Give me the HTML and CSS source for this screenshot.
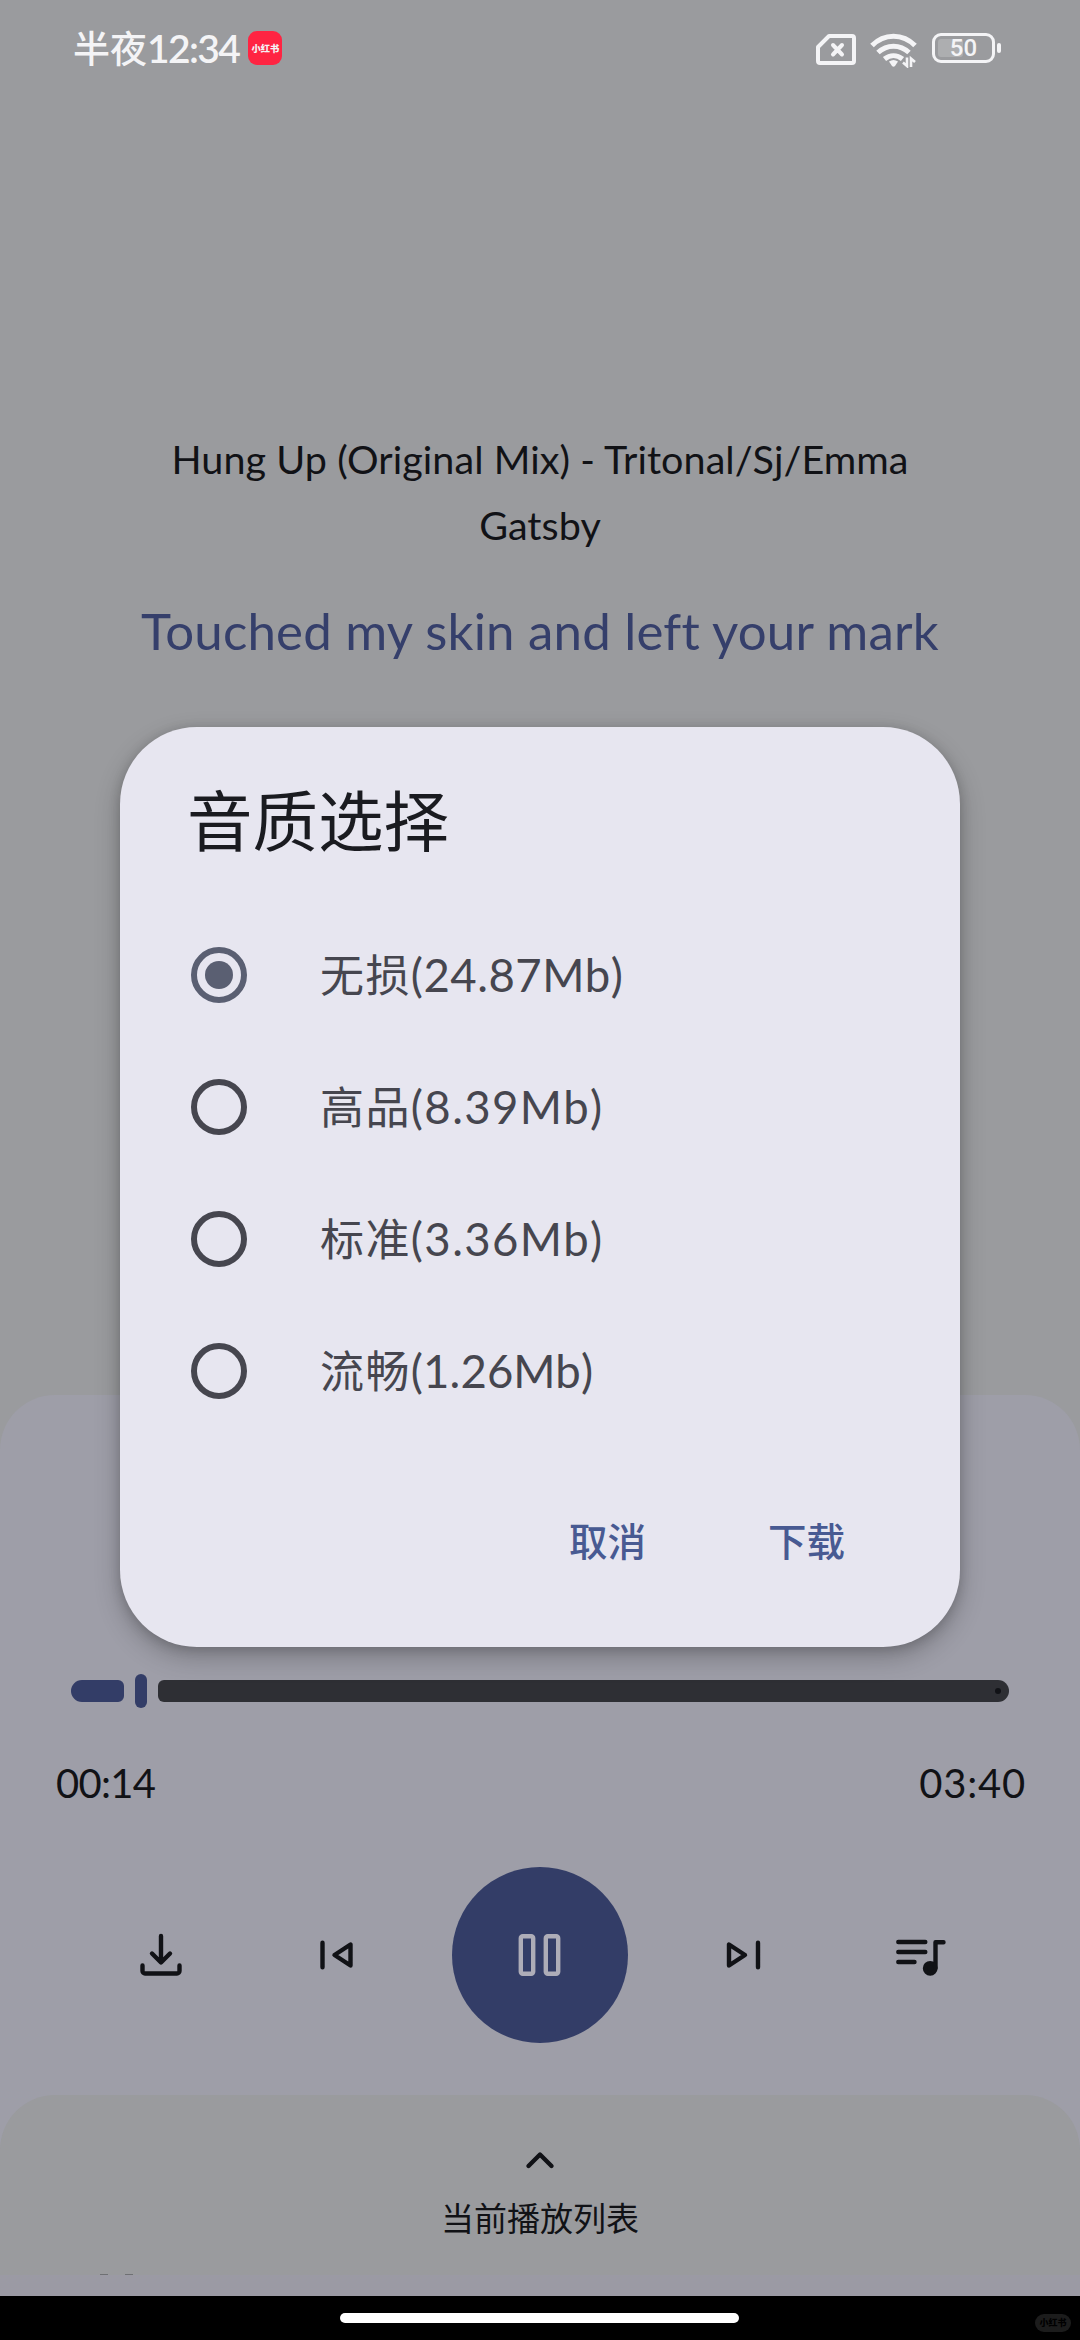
FILE: index.html
```
<!DOCTYPE html>
<html lang="zh-CN">
<head>
<meta charset="utf-8">
<title>音质选择</title>
<link rel="stylesheet" href="styles.css">
</head>
<body>
<div class="screen">
  <header class="status">
    <div class="clock"><span class="clock-word">半夜</span><span class="clock-time">12:34</span></div>
    <div class="app-badge"><span>小红书</span></div>
    <div class="status-icons">
      <svg class="sim" width="40" height="32" viewBox="0 0 40 32" fill="none" stroke="#f4f4f6" stroke-width="4" stroke-linecap="round" stroke-linejoin="round"><path d="M13 2H36a2 2 0 0 1 2 2V27a2 2 0 0 1-2 2H4a2 2 0 0 1-2-2V13Z"/><path d="M17 11l9 9.500M26 11l-9 9.500"/></svg>
      <svg class="wifi" width="48" height="36" viewBox="0 0 48 36" fill="none" stroke="#f4f4f6" stroke-width="5"><path d="M2 13.500C14 1 33 1 45 13.500"/><path d="M8 20.500C17 12 30 12 39 20.500"/><path d="M14.500 27C20 22.500 27 22.500 32.500 27"/><path d="M19 29.500Q23.500 26.500 28 29.500L25 34q-1.500 1.500-3 0Z" fill="#f4f4f6" stroke="none"/><path d="M37 25.500v8.500l-4-3.500M41 35v-8.500l4 3.500" stroke-width="2.600"/></svg>
      <div class="battery"><div class="battery-level"></div><span>50</span></div>
      <div class="battery-nub"></div>
    </div>
  </header>

  <main class="lyrics">
    <h1 class="song">Hung Up (Original Mix) - Tritonal/Sj/Emma<br>Gatsby</h1>
    <p class="line">Touched my skin and left your mark</p>
  </main>

  <section class="player">
    <div class="slider">
      <div class="played"></div><div class="thumb"></div><div class="remaining"><i></i></div>
    </div>
    <div class="times"><span class="elapsed">00:14</span><span class="total">03:40</span></div>
    <div class="controls">
      <svg width="66" height="66" viewBox="0 0 66 66"><path d="M33 14V40M24 31.500L33 40.500L42 31.500M14.500 43.500V49a2.500 2.500 0 0 0 2.500 2.500H49a2.500 2.500 0 0 0 2.500-2.500V43.500"/></svg>
      <svg class="previous" width="66" height="66" viewBox="0 0 66 66"><path d="M18.500 20.800V45.200M46.500 22.500V43.500L30.500 33Z"/></svg>
      <div class="pause"><svg width="66" height="66" viewBox="0 0 66 66"><rect x="13.800" y="14.300" width="12.400" height="37.400" rx="2"/><rect x="38.800" y="14.300" width="12.400" height="37.400" rx="2"/></svg></div>
      <svg class="next" width="66" height="66" viewBox="0 0 66 66"><path d="M47 20.800V45.200M18 22.500V43.500L34 33Z"/></svg>
      <svg width="66" height="66" viewBox="0 0 66 66"><path d="M11.300 20H38.300M11.300 30H38.300M11.300 40H27.500M48.500 46V20.300H56.500"/><circle cx="43.200" cy="46.300" r="5.200" fill="#111216"/></svg>
    </div>
  </section>

  <section class="queue">
    <svg width="30" height="20" viewBox="0 0 30 20"><path d="M3.500 16L15 4.500L26.500 16"/></svg>
    <span>当前播放列表</span>
    <div class="clipped"><i></i><i></i></div>
  </section>
  <div class="edge"></div>
  <footer class="navbar"><div class="home"></div><div class="watermark"><span>小红书</span></div></footer>

  <div class="dialog">
    <h2>音质选择</h2>
    <ul class="options">
      <li class="checked"><i class="radio"></i><span>无损<b class="tight">(24.87Mb)</b></span></li>
      <li><i class="radio"></i><span>高品<b>(8.39Mb)</b></span></li>
      <li><i class="radio"></i><span>标准<b>(3.36Mb)</b></span></li>
      <li><i class="radio"></i><span>流畅<b class="tighter">(1.26Mb)</b></span></li>
    </ul>
    <div class="actions"><span>取消</span><span>下载</span></div>
  </div>
</div>
</body>
</html>
```
FILE: styles.css
```
* { box-sizing: border-box; margin: 0; padding: 0; }
body { background: #9a9b9e; }
.screen {
  position: relative;
  width: 1080px;
  height: 2340px;
  overflow: hidden;
  display: flex;
  flex-direction: column;
  background: #9a9b9e;
  color: #111216;
  font-family: Lato, "Noto Sans CJK SC", sans-serif;
  font-variant-ligatures: none;
}

.status {
  height: 96px;
  padding: 0 79px 0 73px;
  display: flex;
  align-items: center;
  color: #f4f4f6;
}
.clock { display: flex; align-items: center; height: 96px; line-height: 96px; }
.clock-word { font-family: "Noto Sans CJK SC", sans-serif; font-size: 37px; font-weight: 500; margin-top: -3px; }
.clock-time { font-size: 39px; font-weight: 600; letter-spacing: -1.600px; }
.app-badge {
  width: 34px;
  height: 34px;
  margin-left: 9px;
  border-radius: 9px;
  background: #ff2442;
  display: flex;
  align-items: center;
  justify-content: center;
}
.app-badge span { font: 900 9.300px/12px "Noto Sans CJK SC", sans-serif; white-space: nowrap; }
.status-icons { margin-left: auto; display: flex; align-items: center; }
.sim { margin-top: 3px; }
.wifi { margin: 3px 0 0 14px; }
.battery {
  width: 63px;
  height: 30px;
  margin-left: 14px;
  padding: 3px;
  border: 3.500px solid #f4f4f6;
  border-radius: 9px;
  position: relative;
  display: flex;
}
.battery-level { width: 25px; border-radius: 3px; background: #adaeb0; }
.battery span {
  position: absolute;
  inset: 0;
  text-align: center;
  font: 500 24px/24px Roboto, sans-serif;
}
.battery-nub { width: 4px; height: 10px; margin-left: 2px; border-radius: 2px; background: #f4f4f6; }

.lyrics { height: 1299px; padding-top: 330px; text-align: center; }
.song { font-size: 39.500px; line-height: 66px; font-weight: 400; letter-spacing: .06px; }
.line { font-size: 51px; line-height: 66px; margin-top: 40px; letter-spacing: .2px; color: #353f6b; }

.player {
  height: 753px;
  margin-bottom: -53px;
  padding: 279px 0 0;
  border-radius: 55px 55px 0 0;
  background: #9e9ea8;
}
.slider { height: 34px; padding: 0 71px; display: flex; align-items: center; }
.played { width: 53px; height: 22px; border-radius: 11px 6px 6px 11px; background: #333d67; }
.thumb { width: 12px; height: 34px; margin: 0 11px; border-radius: 6px; background: #333d67; }
.remaining {
  flex: 1;
  height: 22px;
  padding-right: 8px;
  border-radius: 6px 11px 11px 6px;
  background: #2e2f34;
  display: flex;
  align-items: center;
  justify-content: flex-end;
}
.remaining i { width: 6px; height: 6px; border-radius: 50%; background: #111216; }
.times {
  margin-top: 42px;
  padding: 0 54px 0 56px;
  display: flex;
  justify-content: space-between;
  font-size: 40px;
  line-height: 66px;
}
.elapsed { letter-spacing: -.7px; }
.total { letter-spacing: .8px; }
.controls {
  height: 176px;
  margin-top: 51px;
  padding: 0 127px 0 128px;
  display: flex;
  align-items: center;
}
.controls svg, .queue svg {
  fill: none;
  stroke: #111216;
  stroke-width: 4.400;
  stroke-linecap: round;
  stroke-linejoin: round;
}
.previous { margin: 0 82px 0 110px; }
.next { margin: 0 110px 0 83px; }
.pause {
  width: 176px;
  height: 176px;
  border-radius: 50%;
  background: #333d67;
  display: flex;
  align-items: center;
  justify-content: center;
}
.controls .pause svg { stroke: #aeadb8; }

.queue {
  height: 180px;
  padding-top: 55px;
  border-radius: 55px 55px 0 0;
  background: #9a9b9e;
  display: flex;
  flex-direction: column;
  align-items: center;
}
.queue span { margin-top: 23px; font: 400 33px/48px "Noto Sans CJK SC", sans-serif; }
.clipped { width: 1080px; margin-top: auto; padding-left: 100px; display: flex; gap: 17px; }
.clipped i { width: 8px; height: 1px; background: #6f7073; }
.edge { height: 21px; background: #9b9aa4; }
.navbar {
  height: 44px;
  background: #000;
  display: grid;
  grid-template-columns: 340px 399px 1fr;
  align-items: center;
}
.home { grid-column: 2; height: 10px; border-radius: 5px; background: #fff; }
.watermark {
  justify-self: end;
  width: 36px;
  height: 18px;
  margin: 9px 9px 0 0;
  border-radius: 9px;
  background: #1c1c1c;
  color: #000;
  text-align: center;
}
.watermark span { display: block; font: 900 9px/17px "Noto Sans CJK SC", sans-serif; }

.dialog {
  position: absolute;
  left: 120px;
  top: 727px;
  width: 840px;
  height: 920px;
  padding: 43px 68px 0 67px;
  border-radius: 77px;
  background: #e7e6f0;
  box-shadow: 0 10px 26px rgba(0, 0, 0, .24), 0 2px 12px rgba(0, 0, 0, .16);
}
.dialog h2 { font: 400 65.500px/96px "Noto Sans CJK SC", sans-serif; color: #1a1b20; }
.options { margin-top: 43px; list-style: none; }
.options li { height: 132px; display: flex; align-items: center; color: #46464f; }
.radio {
  width: 56px;
  height: 56px;
  margin: 0 73px 0 4px;
  border: 6px solid #46464f;
  border-radius: 50%;
  display: flex;
  align-items: center;
  justify-content: center;
}
.checked .radio { border-color: #5a5f72; }
.checked .radio::after { content: ""; width: 28px; height: 28px; border-radius: 50%; background: #5a5f72; }
.options span { margin-top: -3px; font: 400 44px/66px "Noto Sans CJK SC", sans-serif; letter-spacing: 1.400px; }
.options b { font: 400 45.500px/66px Lato, sans-serif; }
.options .tight { letter-spacing: .5px; }
.options .tighter { letter-spacing: .1px; }
.actions { margin-top: 75px; display: flex; justify-content: flex-end; gap: 122px; padding-right: 47px; }
.actions span { font: 500 38.500px/55px "Noto Sans CJK SC", sans-serif; color: #485a92; }
```
